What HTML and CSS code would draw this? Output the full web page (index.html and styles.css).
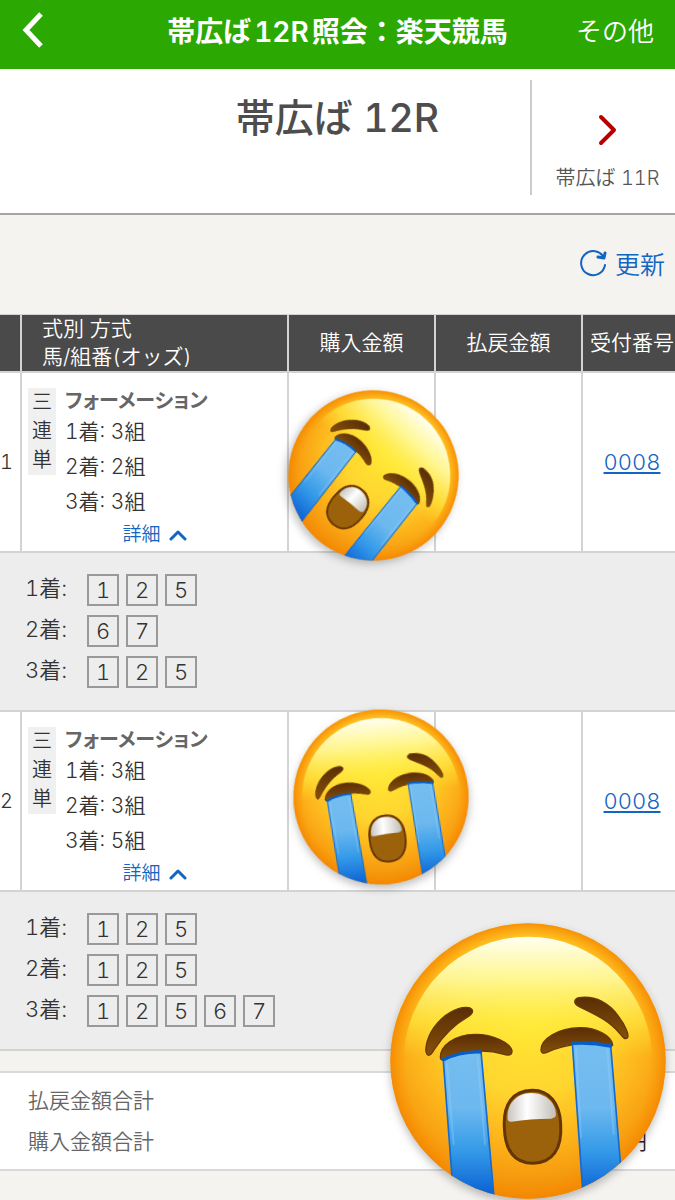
FILE: index.html
```html
<!DOCTYPE html>
<html lang="ja">
<head>
  <meta charset="UTF-8">
  <meta name="viewport" content="width=device-width, initial-scale=1.0">
  <title>帯広ば12R照会：楽天競馬</title>
  <link rel="stylesheet" href="styles.css">
</head>
<body>
  <!-- 泣き顔の共通シンボル -->
  <svg class="defs" width="0" height="0" aria-hidden="true">
    <defs>
      <radialGradient id="face" gradientUnits="userSpaceOnUse" cx="445" cy="340" r="530">
        <stop offset="0" stop-color="#ffe633"/>
        <stop offset="0.4" stop-color="#ffd52f"/>
        <stop offset="0.65" stop-color="#fdb71c"/>
        <stop offset="0.82" stop-color="#f8a112"/>
        <stop offset="1" stop-color="#ee8806"/>
      </radialGradient>
      <radialGradient id="rim" gradientUnits="userSpaceOnUse" cx="445" cy="451" r="413">
        <stop offset="0.88" stop-color="#ff9500" stop-opacity="0"/>
        <stop offset="1" stop-color="#f48600" stop-opacity="0.8"/>
      </radialGradient>
      <linearGradient id="shine" gradientUnits="userSpaceOnUse" x1="445" y1="78" x2="445" y2="440">
        <stop offset="0" stop-color="#fffff0"/>
        <stop offset="0.35" stop-color="#fffa9c" stop-opacity="0.9"/>
        <stop offset="0.7" stop-color="#ffef45" stop-opacity="0.6"/>
        <stop offset="1" stop-color="#ffe733" stop-opacity="0"/>
      </linearGradient>
      <linearGradient id="tear" gradientUnits="userSpaceOnUse" x1="0" y1="420" x2="0" y2="850">
        <stop offset="0" stop-color="#74bdf0"/>
        <stop offset="0.4" stop-color="#6cb8ef"/>
        <stop offset="0.7" stop-color="#349ae8"/>
        <stop offset="1" stop-color="#0b62d4"/>
      </linearGradient>
      <linearGradient id="teeth" x1="0" y1="0" x2="1" y2="0">
        <stop offset="0" stop-color="#c9c5c0"/>
        <stop offset="0.4" stop-color="#ffffff"/>
        <stop offset="0.7" stop-color="#e2e0dc"/>
        <stop offset="1" stop-color="#c2beb8"/>
      </linearGradient>
      <linearGradient id="ink" x1="0" y1="0" x2="0" y2="1">
        <stop offset="0" stop-color="#5a2d05"/>
        <stop offset="1" stop-color="#85500a"/>
      </linearGradient>
      <clipPath id="head"><circle cx="445" cy="451" r="413"/></clipPath>
    </defs>
    <symbol id="crying" viewBox="25 31 840 840">
      <circle cx="445" cy="451" r="413" fill="url(#face)"/>
      <circle cx="445" cy="451" r="413" fill="url(#rim)"/>
      <circle cx="445" cy="451" r="373" fill="url(#shine)"/>
      <g fill="url(#ink)" stroke="#683a06" stroke-width="4">
        <path d="M147 434C132 432 137 388 163 350C190 312 235 285 268 291C285 297 280 310 264 319C224 342 189 377 163 418C157 428 154 434 147 434Z"/>
        <path d="M598 261C650 254 690 280 715 315C738 345 750 375 743 382C735 388 728 378 718 366C686 327 640 309 597 287C578 277 585 264 598 261Z"/>
        <path d="M182 440C182 405 225 372 285 371C340 370 392 397 397 420C398 435 385 435 370 430C310 412 240 424 195 447C186 450 182 447 182 440Z"/>
        <path d="M484 418C484 385 535 352 600 351C650 350 697 375 699 404C640 392 560 397 505 424C490 431 484 427 484 418Z"/>
      </g>
      <g clip-path="url(#head)" fill="url(#tear)" stroke="#176bd0" stroke-width="5" stroke-linejoin="round">
        <path d="M191 450Q245 420 304 423L345 880H223Z"/>
        <path d="M578 397Q635 393 693 405L730 850L612 880Z"/>
      </g>
      <g fill="none" stroke-linecap="round">
        <path d="M192 446Q245 422 303 424M579 398Q635 394 693 406" stroke="#075dc8" stroke-width="10"/>
        <path d="M202 460L222 700M294 440L316 700M589 412L604 680M683 418L702 670" stroke="#a3d8fb" stroke-opacity="0.3" stroke-width="6"/>
      </g>
      <path d="M457 539C508 538 541 578 543 640C548 715 518 757 460 758C402 757 376 715 374 650C370 580 400 540 457 539Z" fill="#9b620b" stroke="#663507" stroke-width="9"/>
      <path d="M384 626C380 584 407 547 455 547C502 547 530 580 529 614Q527 622 514 624Q450 624 396 633Q385 634 384 626Z" fill="url(#teeth)"/>
    </symbol>
  </svg>

  <header class="topbar">
    <button class="back" aria-label="戻る">
      <svg viewBox="0 0 24 40" aria-hidden="true"><path d="M20 4L5 20L20 36"/></svg>
    </button>
    <p class="title">帯広ば<span class="round">12R</span>照会：楽天競馬</p>
    <button class="other">その他</button>
  </header>

  <section class="race">
    <h1>帯広ば 12R</h1>
    <a class="next-race" href="#">
      <svg viewBox="0 0 20 32" aria-hidden="true"><path d="M3 3L16 16L3 29"/></svg>
      <span>帯広ば 11R</span>
    </a>
  </section>

  <main>
    <div class="toolbar">
      <button class="reload">
        <svg viewBox="0 0 28 28" aria-hidden="true">
          <path d="M26 16A12 12 0 1 1 25 9"/>
          <path d="M26 4L25 9L19 8" stroke-width="3"/>
        </svg>
        更新
      </button>
    </div>

    <table class="bets">
      <colgroup>
        <col class="col-no">
        <col>
        <col class="col-amount">
        <col class="col-amount">
        <col class="col-receipt">
      </colgroup>
      <thead>
        <tr>
          <th></th>
          <th class="kind-head">式別 方式<br>馬/組番(オッズ)</th>
          <th>購入金額</th>
          <th>払戻金額</th>
          <th class="receipt">受付番号</th>
        </tr>
      </thead>
      <tbody>
        <tr class="bet">
          <td class="no">1</td>
          <td>
            <div class="kind">
              <span class="type">三連単</span>
              <div class="method">
                <strong>フォーメーション</strong>
                <p>1着: 3組</p>
                <p>2着: 2組</p>
                <p>3着: 3組</p>
              </div>
            </div>
            <button class="more" aria-expanded="true">詳細
              <svg viewBox="0 0 18 12" aria-hidden="true"><path d="M2 10L9 3L16 10"/></svg>
            </button>
          </td>
          <td class="amount"><svg class="emoji emoji-tilted" role="img" aria-label="大泣き"><use href="#crying"/></svg></td>
          <td></td>
          <td class="receipt"><a href="#">0008</a></td>
        </tr>
        <tr class="detail">
          <td colspan="5">
            <ul>
              <li><span class="place">1着:</span><b>1</b><b>2</b><b>5</b></li>
              <li><span class="place">2着:</span><b>6</b><b>7</b></li>
              <li><span class="place">3着:</span><b>1</b><b>2</b><b>5</b></li>
            </ul>
          </td>
        </tr>
        <tr class="bet">
          <td class="no">2</td>
          <td>
            <div class="kind">
              <span class="type">三連単</span>
              <div class="method">
                <strong>フォーメーション</strong>
                <p>1着: 3組</p>
                <p>2着: 3組</p>
                <p>3着: 5組</p>
              </div>
            </div>
            <button class="more" aria-expanded="true">詳細
              <svg viewBox="0 0 18 12" aria-hidden="true"><path d="M2 10L9 3L16 10"/></svg>
            </button>
          </td>
          <td class="amount"><svg class="emoji emoji-small" role="img" aria-label="大泣き"><use href="#crying"/></svg></td>
          <td></td>
          <td class="receipt"><a href="#">0008</a></td>
        </tr>
        <tr class="detail">
          <td colspan="5">
            <ul>
              <li><span class="place">1着:</span><b>1</b><b>2</b><b>5</b></li>
              <li><span class="place">2着:</span><b>1</b><b>2</b><b>5</b></li>
              <li><span class="place">3着:</span><b>1</b><b>2</b><b>5</b><b>6</b><b>7</b></li>
            </ul>
          </td>
        </tr>
      </tbody>
    </table>

    <section class="totals">
      <p>払戻金額合計</p>
      <p>購入金額合計 <span class="yen">円</span></p>
      <svg class="emoji emoji-big" role="img" aria-label="大泣き"><use href="#crying"/></svg>
    </section>
  </main>
</body>
</html>
```

FILE: styles.css
```css
* {
  box-sizing: border-box;
}
body {
  margin: 0;
  min-height: 100vh;
  background: #f4f3f0;
  color: #333;
  font-family: Inter, "Noto Sans CJK JP", sans-serif;
  font-size: 21px;
  font-weight: 350;
  font-variant-numeric: tabular-nums;
  overflow-x: hidden;
}
h1, p, ul {
  margin: 0;
  padding: 0;
}
button {
  border: none;
  background: none;
  padding: 0;
  color: inherit;
  font: inherit;
  cursor: pointer;
}
svg {
  fill: none;
  stroke-linecap: round;
  stroke-linejoin: round;
}
.defs {
  position: absolute;
}

/* ヘッダー */
.topbar {
  display: grid;
  grid-template-columns: 1fr auto 1fr;
  align-items: center;
  height: 69px;
  padding: 0 21px 10px;
  background: #2ca803;
  color: #fff;
}
.back {
  justify-self: start;
  display: flex;
}
.back svg {
  width: 24px;
  height: 40px;
  stroke: #fff;
  stroke-width: 5;
  stroke-linecap: butt;
  stroke-linejoin: miter;
}
.title {
  font-size: 28px;
  font-weight: 700;
}
.round {
  margin: 0 3px;
  font-weight: 600;
}
.other {
  justify-self: end;
  font-size: 26px;
}

.race {
  display: grid;
  grid-template-columns: 1fr auto 1fr;
  height: 146px;
  padding: 11px 0 18px;
  background: #fff;
  border-bottom: 2px solid #a5a5a5;
}
.race h1 {
  grid-column: 2;
  color: #4d4d4d;
  font-size: 39px;
  font-weight: 500;
  line-height: 76px;
}
.next-race {
  justify-self: end;
  display: flex;
  flex-direction: column;
  align-items: center;
  gap: 17px;
  width: 145px;
  padding: 34px 0 0 8px;
  border-left: 2px solid #ccc;
  color: #555;
  font-size: 20px;
  line-height: 30px;
  text-decoration: none;
}
.next-race svg {
  width: 20px;
  height: 32px;
  stroke: #b80000;
  stroke-width: 4;
}

.toolbar {
  display: flex;
  justify-content: flex-end;
  align-items: center;
  height: 99px;
  padding: 0 10px 3px 0;
}
.reload {
  display: flex;
  align-items: center;
  gap: 8px;
  color: #1265c0;
  font-size: 25px;
}
.reload svg {
  width: 28px;
  height: 28px;
  stroke: #1265c0;
  stroke-width: 2;
}

/* 投票一覧 */
.bets {
  width: 100%;
  table-layout: fixed;
  border-collapse: separate;
  border-spacing: 0;
}
.col-no { width: 22px; }
.col-amount { width: 147px; }
.col-receipt { width: 92px; }
.bets th,
.bets td {
  padding: 0;
  border-right: 2px solid #d3d3d3;
  border-bottom: 2px solid #d3d3d3;
}
.bets th:last-child,
.bets td:last-child {
  border-right: none;
}
.bets th {
  border-top: 1px solid #d3d3d3;
  background: #4a4a4a;
  color: #fff;
  font-weight: 350;
  line-height: 28px;
  white-space: nowrap;
}
.bets .kind-head {
  padding-left: 20px;
  text-align: left;
}
.bet td {
  height: 180px;
  background: #fff;
}
.bet .no {
  font-size: 20px;
}
.kind {
  display: flex;
  align-items: flex-start;
  gap: 9px;
  padding: 14px 6px 0;
}
.type {
  width: 28px;
  padding: 0 4px;
  background: #f0f0f0;
  font-size: 20px;
  line-height: 29px;
  word-break: break-all;
}
.method strong {
  display: block;
  color: #666;
  font-size: 20px;
  font-weight: 600;
  line-height: 26px;
  font-feature-settings: "palt";
}
.method p {
  line-height: 35px;
}
.more {
  display: flex;
  align-items: center;
  gap: 8px;
  margin: 0 auto;
  color: #1265c0;
  font-size: 19px;
  line-height: 32px;
}
.more svg {
  width: 18px;
  height: 12px;
  stroke: #1265c0;
  stroke-width: 3;
}
.bets .receipt {
  padding-left: 6px;
  text-align: center;
}
.receipt a {
  color: #1265c0;
  font-size: 22px;
}
.detail td {
  padding: 21px 25px 22px;
  background: #ededed;
}
.detail ul {
  display: grid;
  gap: 9px;
  list-style: none;
}
.detail li {
  display: flex;
  gap: 7px;
  font-size: 22px;
  line-height: 28px;
}
.place {
  width: 55px;
}
.detail b {
  width: 32px;
  border: 2px solid #999;
  font-weight: 350;
  text-align: center;
}

.totals {
  position: relative;
  margin-top: 20px;
  padding: 7px 28px;
  background: #fff;
  border: solid #d9d9d9;
  border-width: 2px 0;
  color: #666;
}
.totals p {
  display: flex;
  justify-content: space-between;
  line-height: 41px;
}
.yen {
  color: #222;
}

/* 金額を隠すスタンプ */
.amount {
  position: relative;
}
.emoji {
  position: absolute;
  z-index: 1;
  filter: drop-shadow(0 4px 4px rgba(0, 0, 0, 0.25));
}
.emoji-tilted {
  top: 16px;
  left: -2px;
  width: 173px;
  height: 173px;
  transform: rotate(43deg);
}
.emoji-small {
  top: -4px;
  left: 3px;
  width: 178px;
  height: 178px;
  transform: rotate(-5deg);
}
.emoji-big {
  top: -152px;
  right: 7px;
  width: 280px;
  height: 280px;
}
```
